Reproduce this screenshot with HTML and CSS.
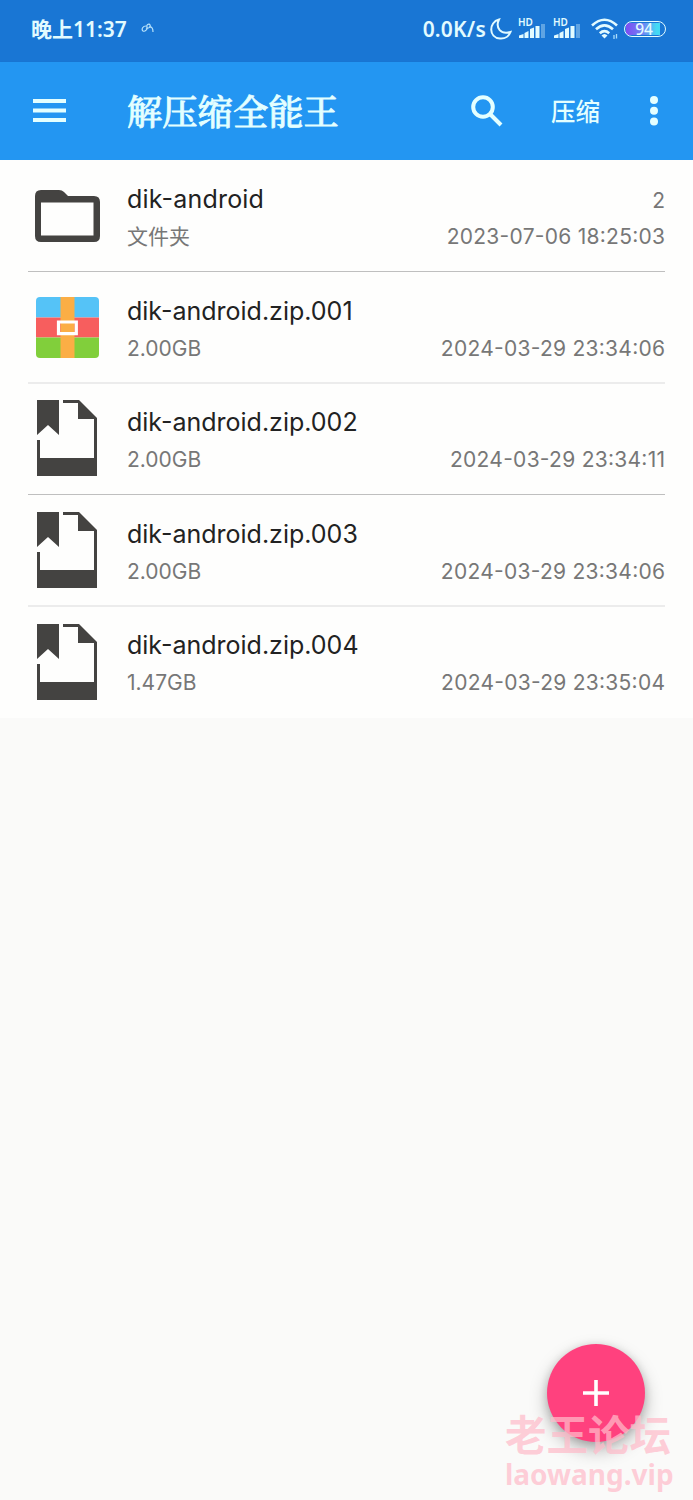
FILE: index.html
```html
<!DOCTYPE html>
<html lang="zh-CN">
<head>
    <meta charset="utf-8">
    <title>解压缩全能王</title>
    <link rel="stylesheet" href="styles.css">
</head>
<body>
    <svg class="defs" width="0" height="0">
        <symbol id="bookmark-file" viewBox="0 0 60 76">
            <path d="M0 0H22V35L11 25L0 35Z M26 0H42L60 18V76H0V40H3V58H57V19H41V3H26Z"/>
        </symbol>
        <symbol id="signal" viewBox="0 0 27 14">
            <path d="M0 14V11.5L4.5 10V14Z M5.500 14V9L9.500 7V14Z M11 14V5L15 3.500V14Z M16.500 14V2H20.500V14Z"/>
            <path opacity=".35" d="M22 0H26V14H22Z"/>
        </symbol>
    </svg>

    <div class="status-bar">
        <span class="time">晚上11:37</span>
        <svg class="link" viewBox="0 0 14 12">
            <path d="M5 3C2 3 0 6 2 8C4 9 7 6 6 4C5 2 8 0 9 2C10 4 7 6 5 5M8 4C11 3 12 6 12 9"/>
        </svg>
        <span class="speed">0.0K/s</span>
        <svg class="moon" viewBox="0 0 22 22">
            <path d="M9 1.500C-1.500 4-1.500 20 10 20.500C15 21 19 18 20.500 14C11 17 5 10 9 1.500Z"/>
        </svg>
        <div class="sim"><span>HD</span><svg><use href="#signal"/></svg></div>
        <div class="sim"><span>HD</span><svg><use href="#signal"/></svg></div>
        <svg class="wifi" viewBox="0 0 28 22">
            <path class="arc" d="M1 7.500Q13.500-4 26 7.500M5 11.300Q13.500 3.500 22 11.300M8.800 15.200Q13.500 11 18.200 15.200"/>
            <path class="dot" d="M10.500 17.500Q13.500 14.500 16.500 17.500L13.500 20.500Z"/>
            <path class="traffic" d="M23 17V21M25.500 16V20.500"/>
        </svg>
        <div class="battery"><span>94</span></div>
    </div>

    <div class="toolbar">
        <svg class="menu" viewBox="0 0 33 23">
            <path d="M0 2H33M0 11.500H33M0 21H33"/>
        </svg>
        <h1>解压缩全能王</h1>
        <svg class="search" viewBox="0 0 32 32">
            <circle cx="12" cy="12" r="9.800"/>
            <path d="M19 19L30 30"/>
        </svg>
        <span class="compress">压缩</span>
        <svg class="more" viewBox="0 0 8 30">
            <circle cx="4" cy="4" r="4"/>
            <circle cx="4" cy="14.700" r="4"/>
            <circle cx="4" cy="25.400" r="4"/>
        </svg>
    </div>

    <div class="files">
        <div class="file">
            <svg class="folder" viewBox="0 0 65 52">
                <path fill-rule="evenodd" d="M6 0H24Q27 0 29 2L33 6H59Q65 6 65 12V46Q65 52 59 52H6Q0 52 0 46V6Q0 0 6 0ZM6 12.500V45.500H58.500V12.500Z"/>
            </svg>
            <div class="info">
                <div class="line"><span class="name short">dik-android</span><span class="count">2</span></div>
                <div class="line meta"><span class="kind">文件夹</span><span class="date">2023-07-06 18:25:03</span></div>
            </div>
        </div>
        <div class="file">
            <svg class="archive" viewBox="0 0 63 61">
                <path fill="#55c3f7" d="M0 20.500V4Q0 0 4 0H59Q63 0 63 4V20.500Z"/>
                <path fill="#f75e5e" d="M0 20.500H63V40.500H0Z"/>
                <path fill="#81cf3b" d="M0 40.500H63V57Q63 61 59 61H4Q0 61 0 57Z"/>
                <path fill="#fbae45" d="M24.500 0H38.500V61H24.500Z"/>
                <path fill="none" stroke="#fff" stroke-width="3.200" d="M22.500 25H40.300V36.700H22.500Z"/>
            </svg>
            <div class="info">
                <div class="line"><span class="name">dik-android.zip.001</span></div>
                <div class="line meta"><span>2.00GB</span><span class="date">2024-03-29 23:34:06</span></div>
            </div>
        </div>
        <div class="file">
            <svg class="doc"><use href="#bookmark-file"/></svg>
            <div class="info">
                <div class="line"><span class="name">dik-android.zip.002</span></div>
                <div class="line meta"><span>2.00GB</span><span class="date">2024-03-29 23:34:11</span></div>
            </div>
        </div>
        <div class="file">
            <svg class="doc"><use href="#bookmark-file"/></svg>
            <div class="info">
                <div class="line"><span class="name">dik-android.zip.003</span></div>
                <div class="line meta"><span>2.00GB</span><span class="date">2024-03-29 23:34:06</span></div>
            </div>
        </div>
        <div class="file">
            <svg class="doc"><use href="#bookmark-file"/></svg>
            <div class="info">
                <div class="line"><span class="name">dik-android.zip.004</span></div>
                <div class="line meta"><span>1.47GB</span><span class="date">2024-03-29 23:35:04</span></div>
            </div>
        </div>
    </div>

    <div class="fab">
        <svg viewBox="0 0 26 26"><path d="M13 0V26M0 13H26"/></svg>
    </div>
    <div class="watermark">
        <div class="forum">老王论坛</div>
        <div class="site">laowang.vip</div>
    </div>
</body>
</html>
```
FILE: styles.css
```css
* {
    box-sizing: border-box;
}
body {
    position: relative;
    margin: 0;
    height: 1500px;
    background-color: #fafaf9;
    font-family: Inter, "Noto Sans CJK SC", sans-serif;
    overflow: hidden;
}
svg {
    display: block;
    flex: none;
}
.defs {
    position: absolute;
}

/* status bar */
.status-bar {
    display: flex;
    align-items: center;
    height: 62px;
    padding: 0 27px 4px 31px;
    background-color: #1976d4;
    color: #e2fbff;
    white-space: nowrap;
}
.time {
    font: 600 21px/30px "Noto Sans", "Noto Sans CJK SC", sans-serif;
}
.link {
    width: 14px;
    height: 12px;
    margin-left: 14px;
    fill: none;
    stroke: #b9e3fb;
    stroke-width: 1.2;
}
.speed {
    margin-left: auto;
    font: 600 21px/30px "Noto Sans", sans-serif;
    letter-spacing: 0.2px;
}
.moon {
    width: 22px;
    height: 22px;
    margin-left: 4px;
    fill: none;
    stroke: #e2fbff;
    stroke-width: 2;
}
.sim {
    position: relative;
    width: 27px;
    height: 20px;
    margin-left: 7px;
    padding-top: 5px;
}
.sim + .sim {
    margin-left: 8px;
}
.sim span {
    position: absolute;
    left: -1px;
    top: -1px;
    font: 600 10px/9px "Noto Sans", sans-serif;
}
.sim svg {
    width: 27px;
    height: 14px;
    fill: #e2fbff;
}
.wifi {
    width: 28px;
    height: 22px;
    margin-left: 10px;
}
.wifi .arc {
    fill: none;
    stroke: #e2fbff;
    stroke-width: 2.6;
}
.wifi .dot {
    fill: #e2fbff;
}
.wifi .traffic {
    stroke: #a9dcfb;
    stroke-width: 1.3;
}
.battery {
    width: 42px;
    height: 16px;
    margin-left: 5px;
    padding: 1px 3px 1px 1px;
    border: 1.5px solid #e2fbff;
    border-radius: 8px;
    background: linear-gradient(90deg, #7c4df2, #6e83f3 50%, #43d9f4 90%) 1px 1px / 34px 12px no-repeat;
    text-align: center;
}
.battery span {
    display: block;
    font: 500 15.5px/12px "Noto Sans", sans-serif;
}

/* toolbar */
.toolbar {
    display: flex;
    align-items: center;
    height: 98px;
    padding: 0 35px 0 33px;
    background-color: #2396f2;
    box-shadow: 0 1px 2px rgba(0, 80, 120, 0.18);
    color: #e4ffff;
}
.menu {
    width: 33px;
    height: 23px;
    margin-top: -2px;
    stroke: #e4ffff;
    stroke-width: 4;
}
.toolbar h1 {
    margin: -3px 0 0 61px;
    font: 500 35.3px/50px "Noto Serif CJK SC", "Noto Sans CJK SC", serif;
    -webkit-text-stroke: 0.8px #e4ffff;
}
.search {
    width: 32px;
    height: 32px;
    margin-left: auto;
    fill: none;
    stroke: #e4ffff;
    stroke-width: 4;
}
.compress {
    margin-left: 48px;
    font: 500 24.5px/36px "Noto Sans CJK SC", sans-serif;
}
.more {
    width: 8px;
    height: 30px;
    margin-left: 50px;
    fill: #e4ffff;
}

/* file list */
.files {
    background-color: #fefefd;
}
.file {
    display: flex;
    align-items: center;
    position: relative;
    height: 111.6px;
    padding: 0 28px;
}
.file:not(:last-child)::after {
    content: "";
    position: absolute;
    left: 28px;
    right: 28px;
    bottom: 0;
    height: 1px;
    background-color: #bfbfbf;
}
.file:nth-child(even)::after {
    height: 2px;
    bottom: -1px;
    background-color: #ececec;
}
.folder {
    width: 65px;
    height: 52px;
    margin: 0 27px 0 7px;
    fill: #444341;
}
.archive {
    width: 63px;
    height: 61px;
    margin: 0 28px 0 8px;
}
.doc {
    width: 60px;
    height: 76px;
    margin: -1px 30px 0 9px;
    fill: #444341;
}
.info {
    flex: 1;
    padding-top: 4px;
    color: #777;
    font-feature-settings: "case";
    white-space: nowrap;
}
.line {
    display: flex;
    justify-content: space-between;
    align-items: center;
    height: 37.5px;
    font-size: 21px;
}
.name {
    font-size: 25px;
    color: #222;
}
.short {
    letter-spacing: 0.2px;
}
.count {
    padding-top: 3px;
}
.kind {
    margin-top: -3px;
}
.date {
    margin-right: -0.3px;
    letter-spacing: 0.27px;
}

/* add button */
.fab {
    display: flex;
    align-items: center;
    justify-content: center;
    position: absolute;
    left: 547px;
    top: 1344px;
    width: 98px;
    height: 98px;
    border-radius: 50%;
    background-color: #ff417e;
    box-shadow: 0 8px 18px rgba(0, 0, 0, 0.28), 0 2px 8px rgba(0, 0, 0, 0.16);
}
.fab svg {
    width: 26px;
    height: 26px;
    stroke: #fff;
    stroke-width: 3.6;
}
.watermark {
    position: absolute;
    left: 505px;
    top: 1409px;
    color: rgba(255, 188, 202, 0.72);
    white-space: nowrap;
}
.forum {
    font: bold 41.5px/48px "Noto Sans CJK SC", sans-serif;
}
.site {
    font: bold 28px/34px "Noto Sans", sans-serif;
}
```
